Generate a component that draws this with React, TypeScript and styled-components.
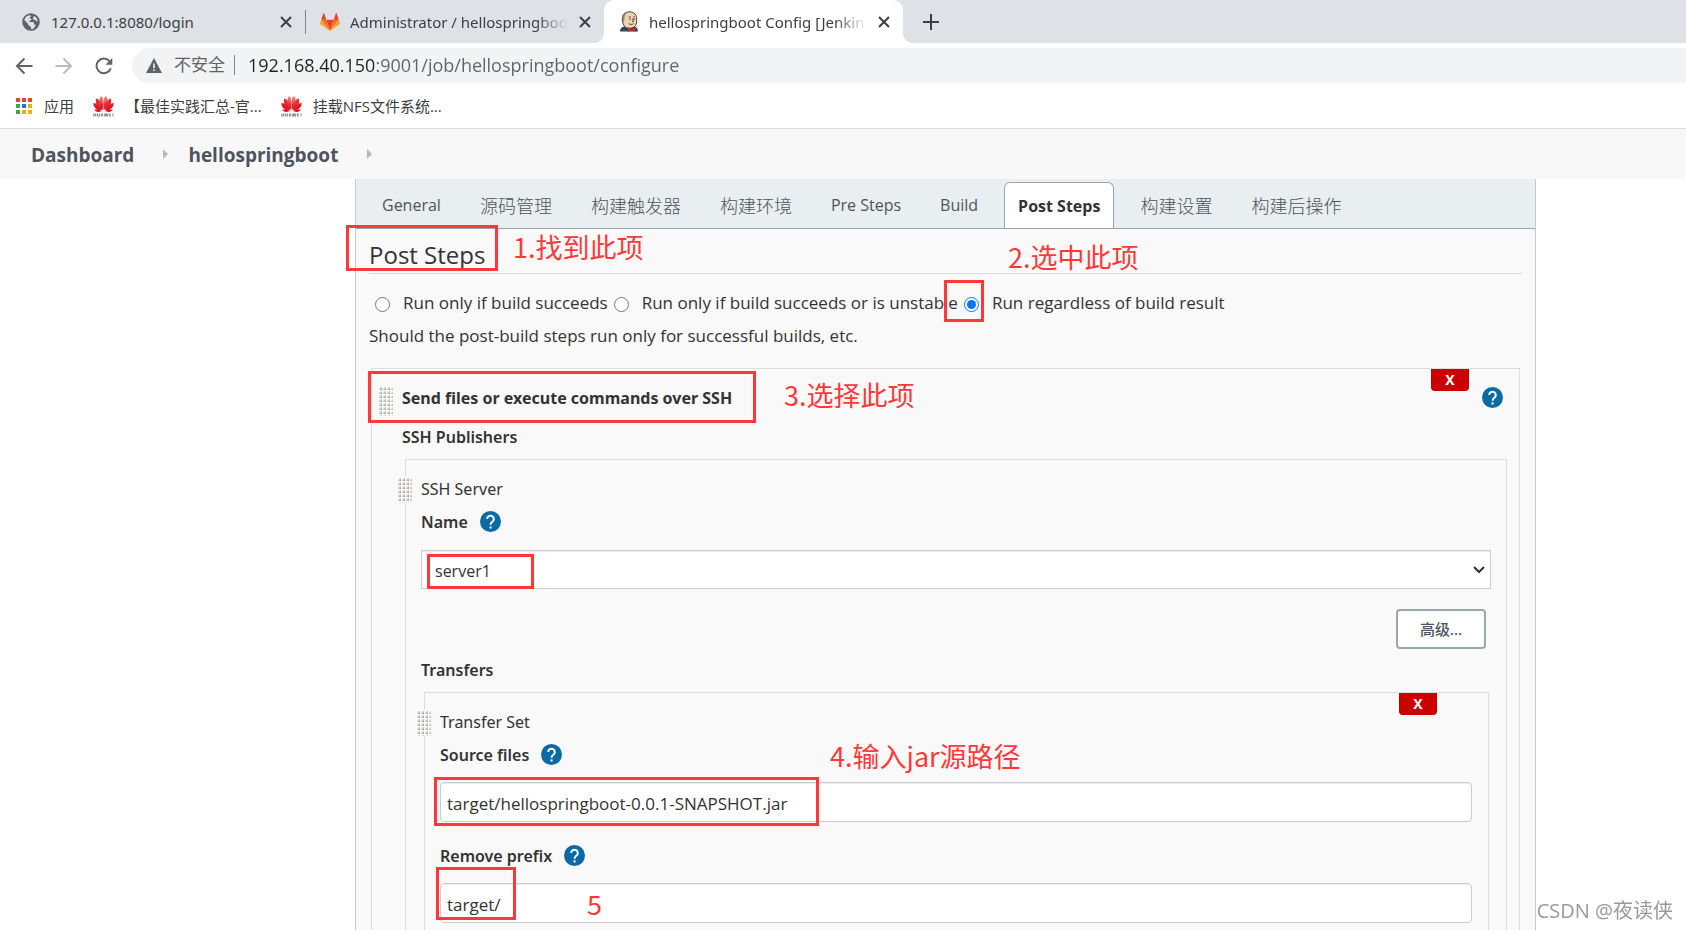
import React from 'react';
import styled, { createGlobalStyle, css } from 'styled-components';

const sans = `'Open Sans', 'Noto Sans CJK SC', sans-serif`;
const wideSans = `'Noto Sans', 'Noto Sans CJK SC', sans-serif`;
const RED = '#ff3939';

const GlobalStyle = createGlobalStyle`
  *, *::before, *::after { box-sizing: border-box; }
  html, body { margin: 0; }
  body {
    overflow: hidden;
    background: #fff;
    color: #333;
    font: 400 16px/24px ${sans};
  }
  button, input, select { font-family: inherit; }
`;

const Window = styled.div`
  display: flex;
  flex-direction: column;
  height: 100vh;
  overflow: hidden;
`;

/* ---------- Browser frame ---------- */

const TabStrip = styled.div`
  display: flex;
  flex: none;
  height: 43px;
  padding-left: 6px;
  background: #dee1e6;
`;

const BrowserTab = styled.div<{ $active?: boolean; $divider?: boolean }>`
  position: relative;
  display: flex;
  align-items: center;
  gap: 10px;
  width: 299px;
  padding: 0 12px 0 15px;
  color: #3c4043;
  ${p => p.$active && css`
    background: #fff;
    border-radius: 10px 10px 0 0;
    &::before, &::after {
      content: '';
      position: absolute;
      bottom: 0;
      width: 10px;
      height: 10px;
    }
    &::before {
      left: -10px;
      background: radial-gradient(circle at 0 0, transparent 10px, #fff 10px);
    }
    &::after {
      right: -10px;
      background: radial-gradient(circle at 100% 0, transparent 10px, #fff 10px);
    }
  `}
  ${p => p.$divider && css`
    &::after {
      content: '';
      position: absolute;
      right: -1px;
      top: 10px;
      width: 1px;
      height: 24px;
      background: #808387;
    }
  `}
`;

const TabTitle = styled.span<{ $fade?: boolean }>`
  flex: 1;
  overflow: hidden;
  white-space: nowrap;
  font-family: ${wideSans};
  font-size: 15px;
  ${p => p.$fade && css`
    mask-image: linear-gradient(to right, #000 calc(100% - 32px), transparent);
  `}
`;

const IconButton = styled.button`
  display: flex;
  flex: none;
  align-items: center;
  justify-content: center;
  padding: 0;
  border: 0;
  background: none;
  color: #3c4043;
`;

const NewTab = styled(IconButton)`
  width: 28px;
  margin-left: 14px;
`;

const Toolbar = styled.div`
  display: flex;
  flex: none;
  align-items: center;
  gap: 16px;
  height: 45px;
  padding-left: 12px;
`;

const NavButton = styled(IconButton)<{ $dim?: boolean }>`
  width: 24px;
  height: 24px;
  color: ${p => (p.$dim ? '#babcbe' : '#5f6368')};
`;

const Omnibox = styled.label`
  display: flex;
  flex: 1;
  align-items: center;
  height: 35px;
  padding: 0 0 1px 14px;
  border-radius: 18px 0 0 18px;
  background: #f1f3f4;
  color: #5f6368;
`;

const Security = styled.span`
  padding: 0 9px 0 12px;
  font-size: 17px;
`;

const OmniDivider = styled.span`
  width: 1px;
  height: 20px;
  margin-right: 13px;
  background: #85888b;
`;

const Address = styled.input`
  flex: 1;
  min-width: 0;
  padding: 0;
  border: 0;
  outline: 0;
  color: #5f6368;
  font-size: 18px;
  background: linear-gradient(to right, #202124 126px, #5f6368 126px);
  background-clip: text;
  -webkit-text-fill-color: transparent;
`;

const Bookmarks = styled.nav`
  display: flex;
  flex: none;
  align-items: center;
  gap: 19px;
  height: 41px;
  padding: 0 15px 4px;
  border-bottom: 1px solid #dadce0;
`;

const Bookmark = styled.a`
  display: flex;
  align-items: center;
  gap: 11px;
  color: #3c4043;
  font-size: 15px;
  text-decoration: none;
  white-space: nowrap;
`;

/* ---------- Jenkins page ---------- */

const Breadcrumbs = styled.nav`
  display: flex;
  flex: none;
  align-items: center;
  height: 50px;
  padding: 2px 0 0 31px;
  background: #f8f8f8;
`;

const Crumb = styled.a`
  color: #4d545d;
  font-size: 19px;
  font-weight: 700;
  text-decoration: none;
`;

const CrumbArrow = styled.span`
  margin: 0 20px 2px 29px;
  border: 5px solid transparent;
  border-left-color: #b8b8b8;
  border-right-width: 0;
`;

const Page = styled.main`
  flex: 1;
  min-height: 0;
  padding: 0 150px 0 355px;
`;

const Panel = styled.div`
  height: 100%;
  border: solid #c3c9cc;
  border-width: 0 1px;
  background: #f9f9f9;
`;

const ConfigTabs = styled.div`
  display: flex;
  align-items: flex-end;
  gap: 13px;
  height: 50px;
  padding-left: 13px;
  border-bottom: 1px solid #98a6ad;
  background: #e9eef1;
`;

const ConfigTab = styled.button<{ $active?: boolean }>`
  height: 46px;
  padding: 0 13px;
  border: 0;
  background: none;
  color: #4d545d;
  font-size: 16px;
  white-space: nowrap;
  &:lang(zh) {
    font-size: 18px;
    font-weight: 300;
  }
  ${p => p.$active && css`
    border: 1px solid #98a6ad;
    border-bottom: 0;
    border-radius: 6px 6px 0 0;
    background: #fff;
    color: #333;
    font-weight: 700;
  `}
`;

const Section = styled.section`
  padding: 0 13px;
  font-family: ${wideSans};
`;

const SectionHead = styled.div`
  position: relative;
  height: 45px;
  padding-top: 10px;
  border-bottom: 1px solid #dcdcdc;
`;

const Title = styled.h2`
  margin: 0;
  font-family: ${sans};
  font-size: 24px;
  font-weight: 500;
  line-height: 32px;
`;

const Radios = styled.div`
  position: relative;
  display: flex;
  gap: 6px;
  padding: 17px 0 0 6px;
  font-family: ${sans};
  font-size: 17px;
`;

const RadioLabel = styled.label`
  position: relative;
  display: flex;
  align-items: center;
  gap: 13px;
  white-space: nowrap;
`;

const Radio = styled.input`
  flex: none;
  width: 15px;
  height: 15px;
  margin: 2px 0 0;
`;

const Hint = styled.p`
  margin: 9px 0 20px;
  font-family: ${sans};
  font-size: 17px;
`;

const Chunk = styled.div`
  position: relative;
  border: 1px solid #dcdcdc;
`;

const BuilderChunk = styled(Chunk)`
  margin: 0 2px;
  padding: 17px 12px 0 30px;
`;

const ServerChunk = styled(Chunk)`
  margin: 10px 0 0 3px;
  padding: 17px 15px 0 15px;
`;

const TransferChunk = styled(Chunk)`
  margin: 10px 2px 0 3px;
  padding: 17px 16px 20px 15px;
`;

const Handle = styled.span<{ $rows: number }>`
  position: absolute;
  top: 17px;
  left: ${p => (p.$rows > 7 ? 6 : -9)}px;
  width: 15px;
  height: ${p => p.$rows * 4 - 2}px;
  background-color: #fff;
  background-image:
    linear-gradient(90deg, #fff 1px, transparent 1px),
    linear-gradient(#fff 1px, transparent 1px),
    linear-gradient(135deg, #f4f4f2 40%, #a8a69f 85%);
  background-size: 4px 4px;
`;

const Delete = styled.button<{ $right: number }>`
  position: absolute;
  top: 0;
  right: ${p => p.$right}px;
  width: 38px;
  height: 22px;
  padding: 0;
  border: 1px solid #c00000;
  border-top: 0;
  border-radius: 0 0 4px 4px;
  background: #cc0000;
  color: #fff;
  font-size: 14px;
  font-weight: 700;
  line-height: 20px;
`;

const ChunkTitle = styled.div`
  font-weight: 700;
`;

const Label = styled.label`
  font-weight: 600;
`;

const GroupLabel = styled.div`
  font-weight: 600;
`;

const PublishersLabel = styled(GroupLabel)`
  margin-top: 15px;
`;

const LabelRow = styled.div`
  display: flex;
  align-items: center;
  gap: 12px;
  margin-top: 9px;
`;

const Field = styled.div`
  position: relative;
  padding-top: 16px;
`;

const TextField = styled(Field)`
  padding: 15px 0 13px;
`;

const control = css`
  display: block;
  width: 100%;
  border: 1px solid #ccc;
  background: #fff;
  color: #333;
  font-family: ${sans};
`;

const TextInput = styled.input`
  ${control}
  height: 40px;
  padding: 2px 6px 0;
  border-radius: 4px;
  box-shadow: inset 0 1px 1px rgba(0, 0, 0, 0.08);
  font-size: 17px;
`;

const Select = styled.select`
  ${control}
  height: 39px;
  padding: 2px 13px 0;
  appearance: none;
  box-shadow: inset 0 1px 1px rgba(0, 0, 0, 0.08);
  font-size: 16px;
`;

const SelectArrow = styled.svg`
  position: absolute;
  right: 6px;
  bottom: 15px;
`;

const Actions = styled.div`
  display: flex;
  justify-content: flex-end;
  padding: 20px 5px 9px 0;
`;

const Advanced = styled.button`
  width: 90px;
  height: 40px;
  padding: 0 0 2px;
  border: 2px solid #98a6ad;
  border-radius: 4px;
  background: #fff;
  color: #4d545d;
  font-size: 15px;
  font-weight: 500;
`;

const HelpButton = styled.button`
  display: flex;
  margin-bottom: 2px;
  padding: 0;
  border: 0;
  background: none;
`;

const ChunkHelp = styled.div`
  position: absolute;
  top: 18px;
  right: 16px;
`;

/* ---------- Markup drawn over the page ---------- */

const Frame = styled.span<{ $x: number; $y: number; $w: number; $h: number }>`
  position: absolute;
  left: ${p => p.$x}px;
  top: ${p => p.$y}px;
  width: ${p => p.$w}px;
  height: ${p => p.$h}px;
  border: 3px solid ${RED};
  pointer-events: none;
  z-index: 2;
`;

const Note = styled.span<{ $x: number; $y: number }>`
  position: absolute;
  left: ${p => p.$x}px;
  top: ${p => p.$y}px;
  color: ${RED};
  font: 400 27px/36px 'Noto Sans CJK SC', sans-serif;
  white-space: nowrap;
  pointer-events: none;
  z-index: 2;
`;

const Watermark = styled.div`
  position: fixed;
  right: 13px;
  bottom: 4px;
  color: #999;
  font: 400 20px/30px 'Open Sans', 'Noto Sans CJK SC', sans-serif;
  text-shadow: 1px 1px 1px #fff;
`;

/* ---------- Icons ---------- */

const CloseIcon = () => (
  <svg width="14" height="14" viewBox="0 0 14 14" stroke="currentColor" strokeWidth="2">
    <path d="M2 2l10 10M12 2L2 12" />
  </svg>
);

const GlobeIcon = () => (
  <svg width="20" height="20" viewBox="0 0 24 24">
    <path fill="#5f6368" d="M12 1.500a10.500 10.500 0 1 0 0 21 10.500 10.500 0 0 0 0-21z" />
    <path fill="#dee1e6" d="M4 9.500C5 6 7.500 4 10.500 3.800c1.800.2 2 1.600.6 2.300-1 .5-1 1.500.2 1.700 1.700.3 1.600 2-.1 2.300-1.300.2-1.700 1-.9 1.900h3.900c1 0 1.400.8 1.400 1.700 0 .9.600 1.300 1.300 1.300.8 0 .9 1 .3 1.700-.9 1-1.500 1.700-1.900 2.900-.5.900-1.600 1-2.700 1-.7-.2-.9-.9-.8-1.700.2-1.300-.3-2-1.400-2.100-1.200-.1-1.700-.8-1.700-1.800 0-.8-.5-1.300-1.200-1.800z" />
    <path fill="#dee1e6" d="M15 4.400c2.700 1 4.600 3.400 5 6.300-.9.600-2 .4-2.500-.5-.4-.8-1-1.100-1.800-1.100-1.300 0-1.900-1.200-1-2.200.6-.7.800-1.500.3-2.500z" />
  </svg>
);

const GitlabIcon = () => (
  <svg width="20" height="18" viewBox="0 0 20 18">
    <path fill="#e24329" d="M10 18L6.300 6.800h7.400z" />
    <path fill="#fc6d26" d="M10 18L6.300 6.800H1.200zM10 18l3.700-11.200h5.100z" />
    <path fill="#fca326" d="M1.200 6.800L0 10.200c-.1.400 0 .8.300 1L10 18zM18.800 6.800l1.200 3.400c.1.400 0 .8-.3 1L10 18z" />
    <path fill="#e24329" d="M1.200 6.800h5.100L4.100.3c-.1-.4-.6-.4-.7 0zM18.800 6.800h-5.100L15.900.3c.1-.4.6-.4.7 0z" />
  </svg>
);

const JenkinsIcon = () => (
  <svg width="20" height="21" viewBox="0 0 20 21">
    <path fill="#2b4b5c" d="M1 20.500c0-2.800 1.300-4.500 4.500-5l4 2 6-2c2.300.7 3.300 2 3.500 5z" />
    <path fill="#efd3b2" stroke="#3b302b" strokeWidth=".9" d="M5.500 15.500C3.600 12.500 2.800 9 3.500 5.500 4.300 2 7.300.7 11 .8c4 .2 6.700 2.800 6.700 7.200 0 3.800-.4 6.600-2.600 8.100-2.600 1.700-6.800 1.800-9.600-.6z" />
    <path fill="#8b8480" d="M3.700 4.700C5 1.800 7 1 9 1.200 6.300 2.600 5.200 5 5.400 8.700l-.5 2.500-.8-.7c-.7-1.900-.8-4-.4-5.800z" />
    <path fill="none" stroke="#4a3b33" strokeWidth=".9" d="M9.500 6.200c.8-.6 1.700-.5 2.300 0M14 6.200c.8-.5 1.500-.4 2 .1M13.600 7.500l.8 2.800-1.400.3M9.700 12.600c1.700 1.300 3.500 1 4.900 0" />
    <path fill="#2d2320" d="M10.300 7.500h1.300v1.300h-1.300zM14.600 7.500h1.200v1.300h-1.200z" />
    <path fill="#d33833" stroke="#7d1b18" strokeWidth=".4" d="M8.800 16.700l3.700 1.400 3.900-1.500v3.700l-3.900-1-3.700 1.100z" />
  </svg>
);

const BackIcon = () => (
  <svg width="18" height="18" viewBox="0 0 18 18" fill="none" stroke="currentColor" strokeWidth="2">
    <path d="M17.500 9H2.500M9.500 1.500L2 9l7.500 7.500" />
  </svg>
);

const ForwardIcon = () => (
  <svg width="18" height="18" viewBox="0 0 18 18" fill="none" stroke="currentColor" strokeWidth="2">
    <path d="M.5 9h15M8.500 1.500L16 9l-7.500 7.500" />
  </svg>
);

const ReloadIcon = () => (
  <svg width="18" height="18" viewBox="0 0 18 18">
    <path fill="none" stroke="currentColor" strokeWidth="2" d="M15.800 11.200A7.300 7.300 0 1 1 14.300 4" />
    <path fill="currentColor" d="M17.300 1v6.800h-6.800z" />
  </svg>
);

const WarningIcon = () => (
  <svg width="16" height="15" viewBox="0 0 16 15">
    <path fill="#5f6368" d="M8 0l8 15H0z" />
    <path fill="#f1f3f4" d="M7.200 5.500h1.600v4.700H7.200zM7.200 11.500h1.600v1.600H7.200z" />
  </svg>
);

const appColors = ['#ea4335', '#ea4335', '#ea4335', '#34a853', '#1a73e8', '#fbab05', '#34a853', '#fbab05', '#fbab05'];

const AppsIcon = () => (
  <svg width="18" height="18" viewBox="0 0 18 18">
    {appColors.map((c, i) => (
      <rect key={i} x={(i % 3) * 6 + 1} y={Math.floor(i / 3) * 6 + 1} width="4" height="4" fill={c} />
    ))}
  </svg>
);

const HuaweiIcon = () => (
  <svg width="21" height="21" viewBox="0 0 21 21">
    <defs>
      <radialGradient id="petal" gradientUnits="userSpaceOnUse" cx="10.500" cy="2" r="13">
        <stop offset="0" stopColor="#f5a08a" />
        <stop offset=".5" stopColor="#e8303a" />
        <stop offset="1" stopColor="#d8101c" />
      </radialGradient>
    </defs>
    <g fill="url(#petal)">
      <path d="M10.200 14C6 9.500 5.500 3 7.800.5 10.200-.2 10.900 4 10.200 14z" />
      <path d="M10.800 14c4.200-4.500 4.700-11 2.400-13.500C10.800-.2 10.100 4 10.800 14z" />
      <path d="M9.400 14.200C4.200 11.500 1.600 6.500 3.400 2.600 6 2.200 8.900 7.500 9.400 14.200z" />
      <path d="M11.600 14.200c5.200-2.700 7.800-7.700 6-11.600-2.600-.4-5.500 4.900-6 11.600z" />
      <path d="M8.900 14.600C3.400 14.500.2 11 .4 7 3 6.800 7 10 8.900 14.600z" />
      <path d="M12.100 14.600c5.500-.1 8.700-3.600 8.500-7.600-2.600-.2-6.600 3-8.500 7.600z" />
      <path d="M8.700 15.100c-3.400 1.600-6.200 1-7.400-1.500 2.600-.4 5.300-.1 7.400 1.500zM12.300 15.100c3.400 1.600 6.200 1 7.400-1.500-2.600-.4-5.300-.1-7.400 1.500z" />
    </g>
    <path stroke="#777" strokeWidth=".9" fill="none" d="M.8 17.500v3M2.800 17.500v3M.8 19h2M4.500 17.500v2.500h2v-2.500M8 20.500l1-3 1 3M11.300 17.500l.8 3 1-3 1 3 .8-3M18 18h-1.700v2H18M20 17.500v3" />
  </svg>
);

const Help = ({ topic }: { topic: string }) => (
  <HelpButton type="button" aria-label={`Help for ${topic}`}>
    <svg width="21" height="21" viewBox="0 0 21 21">
      <circle cx="10.500" cy="10.500" r="10.500" fill="#0b6aa2" />
      <path fill="none" stroke="#fff" strokeWidth="2" d="M7.200 8a3.300 3.300 0 1 1 5 2.800c-1.100.8-1.600 1.300-1.600 2.900" />
      <path fill="#fff" d="M9.500 15.400h2.100v2.100H9.500z" />
    </svg>
  </HelpButton>
);

/* ---------- Screen ---------- */

const configTabs = [
  { name: 'General' },
  { name: '源码管理', lang: 'zh' },
  { name: '构建触发器', lang: 'zh' },
  { name: '构建环境', lang: 'zh' },
  { name: 'Pre Steps' },
  { name: 'Build' },
  { name: 'Post Steps', active: true },
  { name: '构建设置', lang: 'zh' },
  { name: '构建后操作', lang: 'zh' },
];

export default function App() {
  return (
    <Window>
      <GlobalStyle />
      <TabStrip>
        <BrowserTab $divider>
          <GlobeIcon />
          <TabTitle>127.0.0.1:8080/login</TabTitle>
          <IconButton aria-label="Close tab"><CloseIcon /></IconButton>
        </BrowserTab>
        <BrowserTab>
          <GitlabIcon />
          <TabTitle $fade>Administrator / hellospringboo</TabTitle>
          <IconButton aria-label="Close tab"><CloseIcon /></IconButton>
        </BrowserTab>
        <BrowserTab $active>
          <JenkinsIcon />
          <TabTitle $fade>hellospringboot Config [Jenkin</TabTitle>
          <IconButton aria-label="Close tab"><CloseIcon /></IconButton>
        </BrowserTab>
        <NewTab aria-label="New tab">
          <svg width="16" height="16" viewBox="0 0 16 16" stroke="currentColor" strokeWidth="2">
            <path d="M8 0v16M0 8h16" />
          </svg>
        </NewTab>
      </TabStrip>

      <Toolbar>
        <NavButton aria-label="Back"><BackIcon /></NavButton>
        <NavButton aria-label="Forward" $dim><ForwardIcon /></NavButton>
        <NavButton aria-label="Reload"><ReloadIcon /></NavButton>
        <Omnibox>
          <WarningIcon />
          <Security>不安全</Security>
          <OmniDivider />
          <Address aria-label="Address" defaultValue="192.168.40.150:9001/job/hellospringboot/configure" />
        </Omnibox>
      </Toolbar>

      <Bookmarks>
        <Bookmark href="#apps"><AppsIcon />应用</Bookmark>
        <Bookmark href="#practice"><HuaweiIcon />【最佳实践汇总-官...</Bookmark>
        <Bookmark href="#nfs"><HuaweiIcon />挂载NFS文件系统...</Bookmark>
      </Bookmarks>

      <Breadcrumbs>
        <Crumb href="#dashboard">Dashboard</Crumb>
        <CrumbArrow />
        <Crumb href="#job">hellospringboot</Crumb>
        <CrumbArrow />
      </Breadcrumbs>

      <Page>
        <Panel>
          <ConfigTabs>
            {configTabs.map(tab => (
              <ConfigTab key={tab.name} type="button" lang={tab.lang} $active={tab.active}>{tab.name}</ConfigTab>
            ))}
          </ConfigTabs>

          <Section>
            <SectionHead>
              <Title>Post Steps</Title>
              <Frame $x={-23} $y={-4} $w={152} $h={46} />
              <Note $x={144} $y={0}>1.找到此项</Note>
              <Note $x={639} $y={10}>2.选中此项</Note>
            </SectionHead>

            <Radios>
              <RadioLabel><Radio type="radio" name="run" />Run only if build succeeds</RadioLabel>
              <RadioLabel><Radio type="radio" name="run" />Run only if build succeeds or is unstable</RadioLabel>
              <RadioLabel>
                <Radio type="radio" name="run" defaultChecked />Run regardless of build result
                <Frame $x={-20} $y={-11} $w={40} $h={42} />
              </RadioLabel>
            </Radios>
            <Hint>Should the post-build steps run only for successful builds, etc.</Hint>

            <BuilderChunk>
              <Handle $rows={8} />
              <Delete type="button" $right={50}>X</Delete>
              <ChunkHelp><Help topic="SSH" /></ChunkHelp>
              <Frame $x={-4} $y={2} $w={388} $h={52} />
              <Note $x={412} $y={8}>3.选择此项</Note>
              <ChunkTitle>Send files or execute commands over SSH</ChunkTitle>
              <PublishersLabel>SSH Publishers</PublishersLabel>

              <ServerChunk>
                <Handle $rows={7} />
                <div>SSH Server</div>
                <LabelRow>
                  <Label htmlFor="server">Name</Label>
                  <Help topic="Name" />
                </LabelRow>
                <Field>
                  <Select id="server" defaultValue="server1">
                    <option>server1</option>
                  </Select>
                  <SelectArrow width="12" height="8" viewBox="0 0 12 8" fill="none" stroke="#333" strokeWidth="2">
                    <path d="M1 1l5 5 5-5" />
                  </SelectArrow>
                  <Frame $x={6} $y={20} $w={107} $h={35} />
                </Field>
                <Actions><Advanced type="button">高级...</Advanced></Actions>
                <GroupLabel>Transfers</GroupLabel>

                <TransferChunk>
                  <Handle $rows={7} />
                  <Delete type="button" $right={51}>X</Delete>
                  <div>Transfer Set</div>
                  <LabelRow>
                    <Label htmlFor="source">Source files</Label>
                    <Help topic="Source files" />
                  </LabelRow>
                  <TextField>
                    <TextInput id="source" defaultValue="target/hellospringboot-0.0.1-SNAPSHOT.jar" />
                    <Frame $x={-6} $y={10} $w={385} $h={49} />
                    <Note $x={390} $y={-29}>4.输入jar源路径</Note>
                  </TextField>
                  <LabelRow>
                    <Label htmlFor="prefix">Remove prefix</Label>
                    <Help topic="Remove prefix" />
                  </LabelRow>
                  <TextField>
                    <TextInput id="prefix" defaultValue="target/" />
                    <Frame $x={-4} $y={-1} $w={80} $h={53} />
                    <Note $x={147} $y={18}>5</Note>
                  </TextField>
                </TransferChunk>
              </ServerChunk>
            </BuilderChunk>
          </Section>
        </Panel>
      </Page>
      <Watermark>CSDN @夜读侠</Watermark>
    </Window>
  );
}
